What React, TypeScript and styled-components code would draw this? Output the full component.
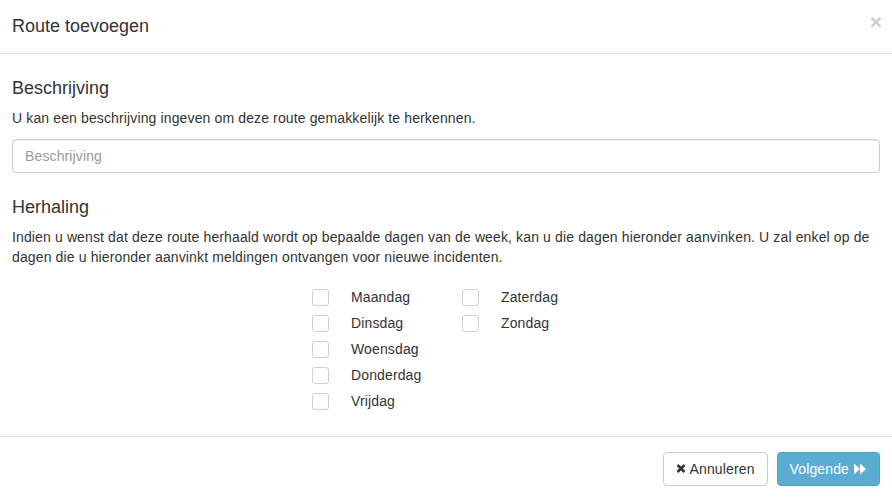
import React from "react";
import styled, { createGlobalStyle } from "styled-components";

const Global = createGlobalStyle`
  html, body { margin: 0; padding: 0; background: #fff; }
  body {
    font-family: "Liberation Sans", Arial, Helvetica, sans-serif;
    font-size: 14px;
    line-height: 1.42857;
    color: #333;
  }
  * { box-sizing: border-box; }
`;

const Modal = styled.div`
  width: 892px;
  background: #fff;
`;

const Header = styled.div`
  display: flex;
  align-items: center;
  justify-content: space-between;
  padding: 14px 12px 14px 12px;
  border-bottom: 1px solid #e5e5e5;
`;

const Title = styled.h4`
  margin: 0;
  font-size: 18px;
  font-weight: 400;
  line-height: 25px;
  color: #333;
`;

const Close = styled.button`
  border: 0;
  background: transparent;
  padding: 0;
  margin: -10px -2px 0 0;
  font-family: "Liberation Sans", Arial, sans-serif;
  font-size: 21px;
  font-weight: 700;
  line-height: 1;
  color: #000;
  opacity: 0.2;
  cursor: pointer;
`;

const Body = styled.div`
  padding: 15px 12px 21px 12px;
  letter-spacing: 0.13px;
`;

const SectionTitle = styled.h4`
  margin: 10px 0 10px 0;
  font-size: 18px;
  font-weight: 400;
  line-height: 19.8px;
  color: #333;
  letter-spacing: 0;
`;

const Text = styled.p`
  margin: 0 0 10px 0;
`;

const Input = styled.input`
  display: block;
  width: 100%;
  height: 34px;
  padding: 6px 12px;
  font-family: inherit;
  font-size: 14px;
  letter-spacing: 0.13px;
  color: #555;
  border: 1px solid #ccc;
  border-radius: 4px;
  box-shadow: inset 0 1px 1px rgba(0, 0, 0, 0.075);
  margin-bottom: 25px;
  &::placeholder { color: #999; }
`;

const Days = styled.div`
  display: grid;
  grid-template-columns: 150px 150px;
  grid-auto-flow: column;
  grid-template-rows: repeat(5, 26px);
  padding-left: 300px;
  margin-top: 17px;
`;

const Day = styled.label`
  display: flex;
  align-items: center;
  cursor: pointer;
`;

const Box = styled.span`
  display: inline-block;
  width: 17px;
  height: 17px;
  border: 1px solid #cfcfcf;
  border-radius: 3px;
  background: #fff;
  margin-right: 22px;
  margin-top: -1px;
`;

const Footer = styled.div`
  display: flex;
  justify-content: flex-end;
  gap: 9px;
  padding: 15px 12px;
  border-top: 1px solid #e5e5e5;
`;

const Button = styled.button<{ $primary?: boolean }>`
  display: inline-flex;
  align-items: center;
  gap: 4px;
  height: 34px;
  padding: 6px 12px;
  font-family: "Liberation Sans", Arial, sans-serif;
  font-size: 14px;
  letter-spacing: 0.13px;
  line-height: 20px;
  border-radius: 4px;
  cursor: pointer;
  border: 1px solid ${(p) => (p.$primary ? "#4ea3cb" : "#ccc")};
  background: ${(p) => (p.$primary ? "#5bacd2" : "#fff")};
  color: ${(p) => (p.$primary ? "#fff" : "#333")};
`;

const TimesIcon = () => (
  <svg width="10" height="11" viewBox="0 0 10 10" aria-hidden>
    <path d="M1.5 1.5 L8.5 8.5 M8.5 1.5 L1.5 8.5" stroke="#333" strokeWidth="2.6" strokeLinecap="butt" />
  </svg>
);

const ForwardIcon = () => (
  <svg width="14" height="12" viewBox="0 0 14 12" aria-hidden>
    <path d="M1 0.5 L7 6 L1 11.5 Z M7 0.5 L13 6 L7 11.5 Z" fill="#fff" />
  </svg>
);

const days = [
  "Maandag",
  "Dinsdag",
  "Woensdag",
  "Donderdag",
  "Vrijdag",
  "Zaterdag",
  "Zondag",
];

export default function App() {
  return (
    <Modal>
      <Global />
      <Header>
        <Title>Route toevoegen</Title>
        <Close aria-label="Sluiten">×</Close>
      </Header>
      <Body>
        <SectionTitle>Beschrijving</SectionTitle>
        <Text>U kan een beschrijving ingeven om deze route gemakkelijk te herkennen.</Text>
        <Input placeholder="Beschrijving" />
        <SectionTitle>Herhaling</SectionTitle>
        <Text>
          Indien u wenst dat deze route herhaald wordt op bepaalde dagen van de week, kan u die dagen
          hieronder aanvinken. U zal enkel op de dagen die u hieronder aanvinkt meldingen ontvangen
          voor nieuwe incidenten.
        </Text>
        <Days>
          {days.map((d) => (
            <Day key={d}>
              <Box />
              {d}
            </Day>
          ))}
        </Days>
      </Body>
      <Footer>
        <Button>
          <TimesIcon /> Annuleren
        </Button>
        <Button $primary>
          Volgende <ForwardIcon />
        </Button>
      </Footer>
    </Modal>
  );
}
